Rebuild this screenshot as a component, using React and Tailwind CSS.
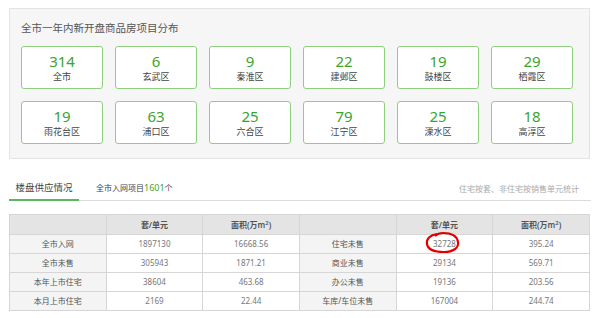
import React from "react";

const boxes = [
  ["314", "全市"], ["6", "玄武区"], ["9", "秦淮区"], ["22", "建邺区"], ["19", "鼓楼区"], ["29", "栖霞区"],
  ["19", "雨花台区"], ["63", "浦口区"], ["25", "六合区"], ["79", "江宁区"], ["25", "溧水区"], ["18", "高淳区"],
];

const rows = [
  ["全市入网", "1897130", "16668.56", "住宅未售", "32728", "395.24"],
  ["全市未售", "305943", "1871.21", "商业未售", "29134", "569.71"],
  ["本年上市住宅", "38604", "463.68", "办公未售", "19136", "203.56"],
  ["本月上市住宅", "2169", "22.44", "车库/车位未售", "167004", "244.74"],
];

const font = { fontFamily: '"Noto Sans", "Noto Sans CJK SC", sans-serif' };

function Head() {
  return (
    <>
      <th className="border border-[#d6d6d6] bg-[#e4e4e4] h-[20px]"></th>
      <th className="border border-[#d6d6d6] bg-[#e4e4e4] text-[8px] font-semibold text-[#555]">套/单元</th>
      <th className="border border-[#d6d6d6] bg-[#e4e4e4] text-[8px] font-semibold text-[#555]">
        面积(万m<sup className="text-[6px]">2</sup>)
      </th>
    </>
  );
}

export default function App() {
  return (
    <div className="w-[600px] h-[318px] bg-white pt-[8px] px-[9px] relative overflow-hidden" style={font}>
      <div className="w-[581px] h-[151px] bg-[#f6f6f6] border border-[#e4e4e4] pl-[11px] pt-[9px]">
        <div className="h-[20px] leading-[20px] text-[10.5px] text-[#555]">全市一年内新开盘商品房项目分布</div>
        <div className="mt-[8px] grid grid-cols-[repeat(6,82px)] gap-x-[12px] gap-y-[12px]">
          {boxes.map(([n, l], i) => (
            <div key={i} className="h-[43px] bg-white border border-[#8fd07f] rounded-[3px] flex flex-col items-center pt-[6px]">
              <div className="text-[15px] leading-[17px] text-[#3aa52f]">{n}</div>
              <div className="mt-[1px] text-[9px] leading-[11px] text-[#444]">{l}</div>
            </div>
          ))}
        </div>
      </div>

      <div className="mt-[18px] h-[24px] border-b border-[#dcdcdc] flex items-center relative">
        <div className="w-[70px] h-[24px] flex items-center justify-center text-[9.5px] text-[#444] border-b-2 border-[#5cb85c] mb-[-1px]">楼盘供应情况</div>
        <div className="ml-[17px] text-[8px] text-[#444] pb-[1px]">全市入网项目<span className="text-[#3aa52f] text-[9px]">1601</span>个</div>
        <div className="ml-auto mr-[12px] text-[8px] text-[#aaa]">住宅按套、非住宅按销售单元统计</div>
      </div>

      <table className="mt-[13px] w-[581px] border-collapse table-fixed text-center">
        <thead>
          <tr>
            <Head />
            <Head />
          </tr>
        </thead>
        <tbody>
          {rows.map((r, i) => (
            <tr key={i} className="h-[19px] text-[8px]">
              <td className="border border-[#d6d6d6] bg-[#f4f4f4] text-[#555]">{r[0]}</td>
              <td className="border border-[#d6d6d6] text-[#777]">{r[1]}</td>
              <td className="border border-[#d6d6d6] text-[#777]">{r[2]}</td>
              <td className="border border-[#d6d6d6] bg-[#f4f4f4] text-[#555]">{r[3]}</td>
              <td className="border border-[#d6d6d6] text-[#777]">{r[4]}</td>
              <td className="border border-[#d6d6d6] text-[#777]">{r[5]}</td>
            </tr>
          ))}
        </tbody>
      </table>

      <svg className="absolute left-[425px] top-[231px]" width="36" height="23" viewBox="0 0 36 23">
        <path d="M12 3 C5 4 1 8 2 13 C3 19 10 21 19 21 C28 21 34 17 33 11 C32 5 26 2 18 2 C15 2 12 3 10 5" fill="none" stroke="#e00000" strokeWidth="2.2" />
      </svg>
    </div>
  );
}
